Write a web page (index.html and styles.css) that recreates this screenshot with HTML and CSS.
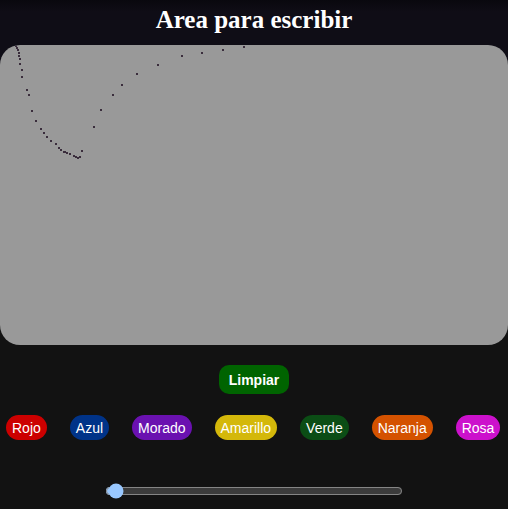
FILE: index.html
```html
<!DOCTYPE html>
<html lang="es">
<head>
<meta charset="utf-8">
<title>Area para escribir</title>
<link rel="stylesheet" href="styles.css">
</head>
<body>
<div class="sheet">
<header class="top">
  <h1 class="title">Area para escribir</h1>
</header>
<div class="board">
  <svg class="ink" width="508" height="300" viewBox="0 45 508 300" xmlns="http://www.w3.org/2000/svg">
    <g fill="#3a2d3c">
      <rect x="15" y="45" width="2" height="2"/>
      <rect x="16" y="47" width="2" height="2"/>
      <rect x="17" y="49" width="2" height="2"/>
      <rect x="18" y="52" width="2" height="2"/>
      <rect x="18" y="55" width="2" height="2"/>
      <rect x="19" y="58" width="2" height="2"/>
      <rect x="19" y="63" width="2" height="2"/>
      <rect x="21" y="69" width="2" height="2"/>
      <rect x="21" y="76" width="2" height="2"/>
      <rect x="26" y="89" width="2" height="2"/>
      <rect x="28" y="94" width="2" height="2"/>
      <rect x="31" y="110" width="2" height="2"/>
      <rect x="35" y="120" width="2" height="2"/>
      <rect x="40" y="128" width="2" height="2"/>
      <rect x="43" y="132" width="2" height="2"/>
      <rect x="46" y="136" width="2" height="2"/>
      <rect x="50" y="140" width="2" height="2"/>
      <rect x="55" y="143" width="2" height="2"/>
      <rect x="58" y="147" width="2" height="2"/>
      <rect x="60" y="149" width="2" height="2"/>
      <rect x="63" y="151" width="3" height="2"/>
      <rect x="66" y="152" width="2" height="2"/>
      <rect x="69" y="153" width="2" height="2"/>
      <rect x="73" y="155" width="2" height="2"/>
      <rect x="75" y="156" width="2" height="2"/>
      <rect x="77" y="157" width="2" height="2"/>
      <rect x="79" y="156" width="2" height="2"/>
      <rect x="81" y="150" width="2" height="2"/>
      <rect x="93" y="126" width="2" height="2"/>
      <rect x="100" y="109" width="2" height="2"/>
      <rect x="112" y="94" width="2" height="2"/>
      <rect x="121" y="84" width="2" height="2"/>
      <rect x="136" y="73" width="2" height="2"/>
      <rect x="157" y="64" width="2" height="2"/>
      <rect x="181" y="55" width="2" height="2"/>
      <rect x="201" y="52" width="2" height="2"/>
      <rect x="222" y="49" width="2" height="2"/>
      <rect x="243" y="46" width="2" height="2"/>
    </g>
  </svg>
</div>
</div>
<div class="actions">
  <button class="clear">Limpiar</button>
</div>
<div class="colors">
  <button class="chip red">Rojo</button>
  <button class="chip blue">Azul</button>
  <button class="chip purple">Morado</button>
  <button class="chip yellow">Amarillo</button>
  <button class="chip green">Verde</button>
  <button class="chip orange">Naranja</button>
  <button class="chip pink">Rosa</button>
</div>
<div class="size">
  <input class="range" type="range" min="1" max="100" value="2">
</div>
</body>
</html>
```
FILE: styles.css
```css
html, body {
  margin: 0;
  padding: 0;
}
body {
  background: #121212;
  color-scheme: dark;
  font-family: "Liberation Sans", Arial, sans-serif;
  width: 508px;
  height: 509px;
  overflow: hidden;
}
.sheet {
  background: linear-gradient(#09080e 0px, #0f0d16 12px, #0f0d16 80px, #121212 80px);
}
.top {
  height: 45px;
  box-sizing: border-box;
  padding-top: 5px;
}
.title {
  margin: 0;
  text-align: center;
  color: #ffffff;
  font-family: "Liberation Serif", "Times New Roman", serif;
  font-weight: bold;
  font-size: 25px;
  line-height: 29px;
}
.board {
  height: 300px;
  background: #999999;
  border-radius: 20px;
  overflow: hidden;
}
.ink {
  display: block;
}
.actions {
  display: flex;
  justify-content: center;
  padding-top: 20px;
}
.clear {
  background: #006400;
  color: #ffffff;
  border: none;
  border-radius: 10px;
  font-family: "Liberation Sans", Arial, sans-serif;
  font-weight: bold;
  font-size: 14px;
  height: 29px;
  padding: 0 10px;
}
.colors {
  display: flex;
  gap: 23px;
  padding: 21px 0 0 6px;
}
.chip {
  border: none;
  color: #ffffff;
  font-family: "Liberation Sans", Arial, sans-serif;
  font-size: 14px;
  height: 25px;
  padding: 0 6px;
  border-radius: 13px;
}
.red { background: #cc0000; }
.blue { background: #003388; }
.purple { background: #6a11b0; }
.yellow { background: #d4b80a; }
.green { background: #0b4d15; }
.orange { background: #d45200; }
.pink { background: #cc11cc; }
.size {
  display: flex;
  justify-content: center;
  padding-top: 43px;
}
.range {
  width: 298px;
  margin: 0;
}
```
